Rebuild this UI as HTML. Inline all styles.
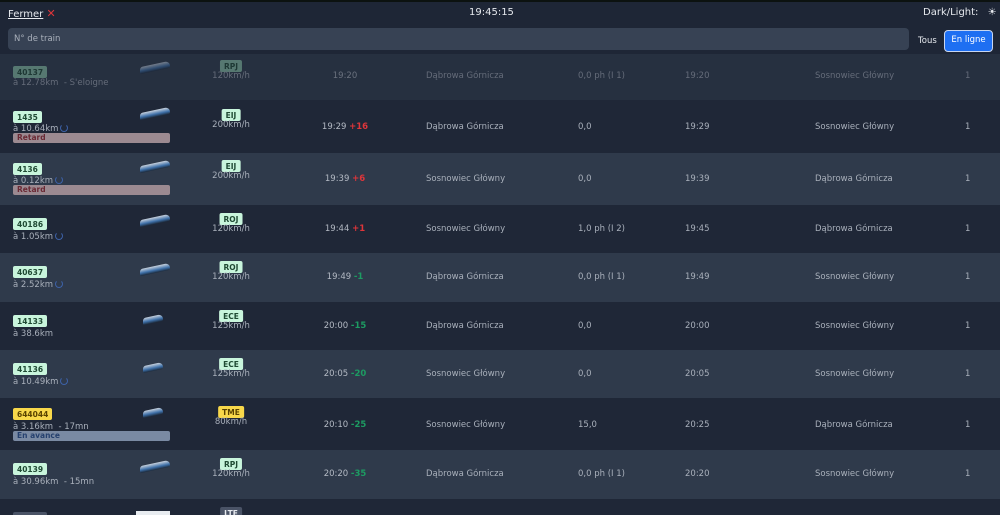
<!DOCTYPE html>
<html><head><meta charset="utf-8"><style>
*{margin:0;padding:0;box-sizing:border-box}
html,body{width:1000px;height:515px;overflow:hidden}
body{background:#1e2636;font-family:"DejaVu Sans","Liberation Sans",sans-serif;color:#c9ced6;position:relative;font-size:8.5px}
.top{position:absolute;left:0;top:0;width:1000px;height:2px;background:#0c1210}
.a{position:absolute;white-space:nowrap}
.row{position:absolute;left:0;width:1000px;overflow:hidden}
.o{background:#2f3a4b}.e{background:#1f2737}
.b{position:absolute;left:13px;font-size:7.5px;font-weight:bold;padding:1.5px 4px;border-radius:2px;background:#c8f5dc;color:#1f4a33}
.t{position:absolute;left:231px;transform:translateX(-50%);font-size:7.5px;font-weight:bold;padding:1.5px 4px;border-radius:2px;background:#c8f5dc;color:#1f4a33}
.s{position:absolute;left:231px;transform:translateX(-50%);color:#a9b0bb}
.sub{position:absolute;left:13px;color:#a9b0bb}
.bar{position:absolute;left:13px;width:157px;height:10px;border-radius:2px;font-size:7.5px;font-weight:bold;padding-left:4px;line-height:10px}
.tr{position:absolute;left:140px;width:30px;height:7px;border-radius:3px 6px 2px 2px;background:linear-gradient(#c8d2de,#3d6fa8 60%,#1c2a3c);transform:skewY(-12deg)}
.tm{position:absolute;left:345px;transform:translateX(-50%);color:#b4bac4}
.c{position:absolute;color:#a9b0bb}
.spin{display:inline-block;width:8px;height:8px;border:1.2px solid #3d62a8;border-top-color:transparent;border-radius:50%;vertical-align:-1px;margin-left:2px}
.r{color:#e0353a;font-weight:bold}.g{color:#1d9b62;font-weight:bold}
</style></head><body>
<div class="top"></div>
<div class="a" style="left:8px;top:7px;font-size:10px;color:#e6e9ee"><span style="text-decoration:underline">Fermer</span> <span style="color:#e0353a;font-weight:bold;font-size:11px">✕</span></div>
<div class="a" style="left:469px;top:7px;font-size:10px;color:#e6e9ee">19:45:15</div>
<div class="a" style="left:923px;top:7px;font-size:10px;color:#e6e9ee">Dark/Light: <span style="margin-left:6px">☀</span></div>
<div class="a" style="left:8px;top:28px;width:901px;height:22px;background:#374254;border-radius:4px;color:#a9b0bb;font-size:8.5px;padding:6px 6px">N° de train</div>
<div class="a" style="left:918px;top:36px;color:#e6e9ee;font-size:8.5px">Tous</div>
<div class="a" style="left:944px;top:30px;width:49px;height:22px;background:#1e6ff2;border:1.5px solid #c8d6f0;border-radius:4px;color:#fff;font-size:8.5px;text-align:center;line-height:19px">En ligne</div>

<div class="row o" style="top:54px;height:46px;opacity:.5">
<div class="b" style="top:12px;background:#8ec9ac">40137</div><div class="sub" style="top:24px">à 12.78km &nbsp;- S'eloigne</div>
<div class="tr" style="top:10px"></div><div class="t" style="top:6px;background:#8ec9ac">RPJ</div><div class="s" style="top:17px">120km/h</div>
<div class="tm" style="top:17px">19:20</div><div class="c" style="left:426px;top:17px">Dąbrowa Górnicza</div><div class="c" style="left:578px;top:17px">0,0 ph (I 1)</div><div class="c" style="left:685px;top:17px">19:20</div><div class="c" style="left:815px;top:17px">Sosnowiec Główny</div><div class="c" style="left:965px;top:17px">1</div></div>

<div class="row e" style="top:100px;height:53px">
<div class="b" style="top:11px">1435</div><div class="sub" style="top:24px">à 10.64km<span class="spin"></span></div><div class="bar" style="top:33px;background:#9c8a91;color:#6b2a35">Retard</div>
<div class="tr" style="top:10px"></div><div class="t" style="top:9px">EIJ</div><div class="s" style="top:20px">200km/h</div>
<div class="tm" style="top:22px">19:29 <span class="r">+16</span></div><div class="c" style="left:426px;top:22px">Dąbrowa Górnicza</div><div class="c" style="left:578px;top:22px">0,0</div><div class="c" style="left:685px;top:22px">19:29</div><div class="c" style="left:815px;top:22px">Sosnowiec Główny</div><div class="c" style="left:965px;top:22px">1</div></div>

<div class="row o" style="top:153px;height:52px">
<div class="b" style="top:10px">4136</div><div class="sub" style="top:23px">à 0.12km<span class="spin"></span></div><div class="bar" style="top:32px;background:#9c8a91;color:#6b2a35">Retard</div>
<div class="tr" style="top:10px"></div><div class="t" style="top:7px">EIJ</div><div class="s" style="top:18px">200km/h</div>
<div class="tm" style="top:21px">19:39 <span class="r">+6</span></div><div class="c" style="left:426px;top:21px">Sosnowiec Główny</div><div class="c" style="left:578px;top:21px">0,0</div><div class="c" style="left:685px;top:21px">19:39</div><div class="c" style="left:815px;top:21px">Dąbrowa Górnicza</div><div class="c" style="left:965px;top:21px">1</div></div>

<div class="row e" style="top:205px;height:48px">
<div class="b" style="top:13px">40186</div><div class="sub" style="top:27px">à 1.05km<span class="spin"></span></div>
<div class="tr" style="top:12px"></div><div class="t" style="top:8px">ROJ</div><div class="s" style="top:19px">120km/h</div>
<div class="tm" style="top:19px">19:44 <span class="r">+1</span></div><div class="c" style="left:426px;top:19px">Sosnowiec Główny</div><div class="c" style="left:578px;top:19px">1,0 ph (I 2)</div><div class="c" style="left:685px;top:19px">19:45</div><div class="c" style="left:815px;top:19px">Dąbrowa Górnicza</div><div class="c" style="left:965px;top:19px">1</div></div>

<div class="row o" style="top:253px;height:49px">
<div class="b" style="top:13px">40637</div><div class="sub" style="top:27px">à 2.52km<span class="spin"></span></div>
<div class="tr" style="top:13px"></div><div class="t" style="top:8px">ROJ</div><div class="s" style="top:19px">120km/h</div>
<div class="tm" style="top:19px">19:49 <span class="g">-1</span></div><div class="c" style="left:426px;top:19px">Dąbrowa Górnicza</div><div class="c" style="left:578px;top:19px">0,0 ph (I 1)</div><div class="c" style="left:685px;top:19px">19:49</div><div class="c" style="left:815px;top:19px">Sosnowiec Główny</div><div class="c" style="left:965px;top:19px">1</div></div>

<div class="row e" style="top:302px;height:48px">
<div class="b" style="top:13px">14133</div><div class="sub" style="top:27px">à 38.6km</div>
<div class="tr" style="top:14px;left:143px;width:20px"></div><div class="t" style="top:8px">ECE</div><div class="s" style="top:19px">125km/h</div>
<div class="tm" style="top:19px">20:00 <span class="g">-15</span></div><div class="c" style="left:426px;top:19px">Dąbrowa Górnicza</div><div class="c" style="left:578px;top:19px">0,0</div><div class="c" style="left:685px;top:19px">20:00</div><div class="c" style="left:815px;top:19px">Sosnowiec Główny</div><div class="c" style="left:965px;top:19px">1</div></div>

<div class="row o" style="top:350px;height:48px">
<div class="b" style="top:13px">41136</div><div class="sub" style="top:27px">à 10.49km<span class="spin"></span></div>
<div class="tr" style="top:14px;left:143px;width:20px"></div><div class="t" style="top:8px">ECE</div><div class="s" style="top:19px">125km/h</div>
<div class="tm" style="top:19px">20:05 <span class="g">-20</span></div><div class="c" style="left:426px;top:19px">Sosnowiec Główny</div><div class="c" style="left:578px;top:19px">0,0</div><div class="c" style="left:685px;top:19px">20:05</div><div class="c" style="left:815px;top:19px">Sosnowiec Główny</div><div class="c" style="left:965px;top:19px">1</div></div>

<div class="row e" style="top:398px;height:52px">
<div class="b" style="top:10px;background:#f8d84a;color:#5a4300">644044</div><div class="sub" style="top:24px">à 3.16km &nbsp;- 17mn</div><div class="bar" style="top:33px;background:#7a8aa3;color:#25406e">En avance</div>
<div class="tr" style="top:11px;left:143px;width:20px"></div><div class="t" style="top:8px;background:#f8d84a;color:#5a4300">TME</div><div class="s" style="top:19px">80km/h</div>
<div class="tm" style="top:22px">20:10 <span class="g">-25</span></div><div class="c" style="left:426px;top:22px">Sosnowiec Główny</div><div class="c" style="left:578px;top:22px">15,0</div><div class="c" style="left:685px;top:22px">20:25</div><div class="c" style="left:815px;top:22px">Dąbrowa Górnicza</div><div class="c" style="left:965px;top:22px">1</div></div>

<div class="row o" style="top:450px;height:49px">
<div class="b" style="top:13px">40139</div><div class="sub" style="top:27px">à 30.96km &nbsp;- 15mn</div>
<div class="tr" style="top:13px"></div><div class="t" style="top:8px">RPJ</div><div class="s" style="top:19px">120km/h</div>
<div class="tm" style="top:19px">20:20 <span class="g">-35</span></div><div class="c" style="left:426px;top:19px">Dąbrowa Górnicza</div><div class="c" style="left:578px;top:19px">0,0 ph (I 1)</div><div class="c" style="left:685px;top:19px">20:20</div><div class="c" style="left:815px;top:19px">Sosnowiec Główny</div><div class="c" style="left:965px;top:19px">1</div></div>

<div class="row e" style="top:499px;height:16px">
<div class="a" style="left:13px;top:13px;background:#4a5366;width:34px;height:6px;border-radius:2px"></div>
<div class="a" style="left:136px;top:12px;width:34px;height:4px;background:#e8ecf0"></div>
<div class="t" style="top:8px;background:#4a5366;color:#e6e9ee">LTE</div></div>
</body></html>
